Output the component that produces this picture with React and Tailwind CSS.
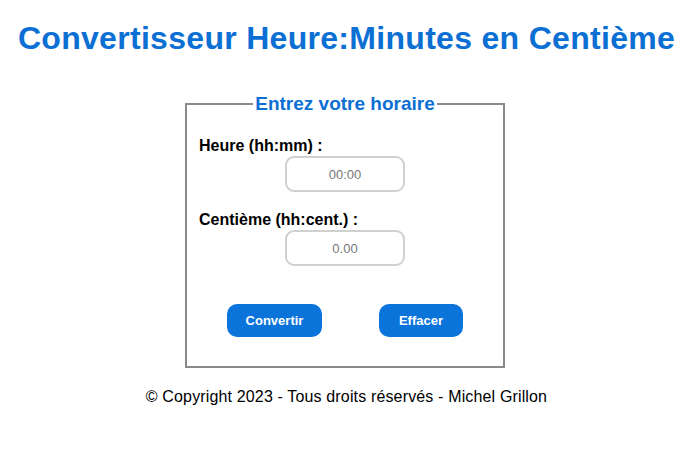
import React from "react";

export default function App() {
  return (
    <div className="w-[693px] h-[466px] bg-white flex flex-col items-center font-['Liberation_Sans',Arial,sans-serif]">
      {/* Titre */}
      <h1 className="mt-[20px] text-[32px] leading-[36px] font-bold text-[#0b6fd3] tracking-[0.3px]">
        Convertisseur Heure:Minutes en Centième
      </h1>

      {/* Formulaire */}
      <fieldset className="mt-[37px] mr-[3px] w-[320px] h-[275px] border-2 border-[#8a8a8a] px-[12px] pt-0 pb-0">
        <legend className="mx-auto px-[2px] text-[19px] leading-[21px] font-bold text-[#0b6fd3]">
          Entrez votre horaire
        </legend>

        <div className="mt-[23px] flex flex-col">
          <label className="text-[16px] leading-[18px] font-bold text-black">Heure (hh:mm) :</label>
          <input
            type="text"
            placeholder="00:00"
            className="mt-[1px] self-center w-[120px] h-[36px] rounded-[9px] border-2 border-[#d0d0d0] text-center text-[13px] text-[#666] placeholder:text-[#777] outline-none"
          />

          <label className="mt-[19px] text-[16px] leading-[18px] font-bold text-black">Centième (hh:cent.) :</label>
          <input
            type="text"
            placeholder="0.00"
            className="mt-[1px] self-center w-[120px] h-[36px] rounded-[9px] border-2 border-[#d0d0d0] text-center text-[13px] text-[#666] placeholder:text-[#777] outline-none"
          />

          <div className="mt-[38px] flex justify-center gap-[57px]">
            <button className="w-[95px] h-[33px] rounded-[10px] bg-[#0a74da] text-white text-[13px] font-bold">
              Convertir
            </button>
            <button className="w-[84px] h-[33px] rounded-[10px] bg-[#0a74da] text-white text-[13px] font-bold">
              Effacer
            </button>
          </div>
        </div>
      </fieldset>

      <p className="mt-[20px] text-[16px] leading-[18px] text-black tracking-[0.15px]">
        © Copyright 2023 - Tous droits réservés - Michel Grillon
      </p>
    </div>
  );
}
